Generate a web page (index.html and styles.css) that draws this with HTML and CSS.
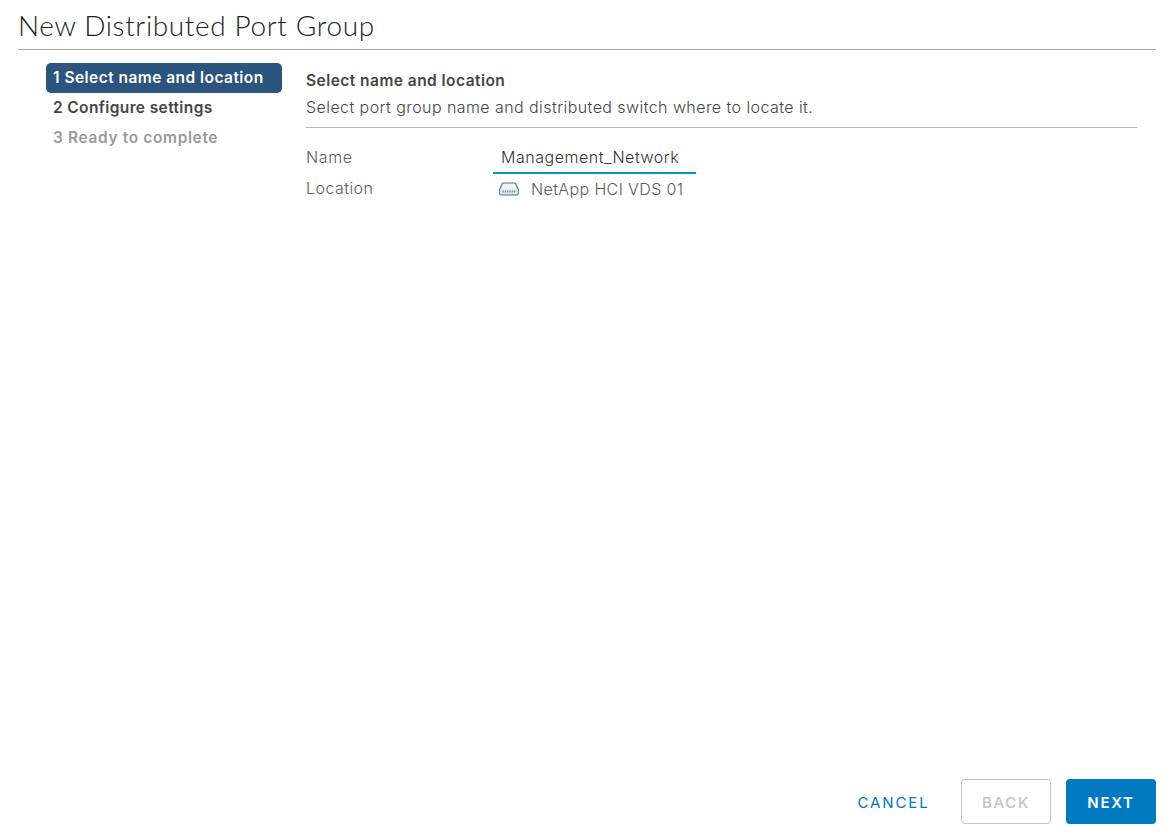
FILE: index.html
```html
<!DOCTYPE html>
<html lang="en">
<head>
<meta charset="utf-8">
<title>New Distributed Port Group</title>
<link rel="stylesheet" href="styles.css">
</head>
<body>
<main class="wizard">
  <header class="wizard-header"><h1 class="wizard-title">New Distributed Port Group</h1></header>
  <div class="wizard-body">
    <nav class="steps">
      <div class="step step-active">1 Select name and location</div>
      <div class="step step-ready">2 Configure settings</div>
      <div class="step step-disabled">3 Ready to complete</div>
    </nav>
    <section class="page">
      <div class="page-header">
        <h2 class="page-title">Select name and location</h2>
        <p class="page-description">Select port group name and distributed switch where to locate it.</p>
      </div>
      <div class="form">
        <div class="label">Name</div>
        <div class="name-field">Management_Network</div>
        <div class="label label-location">Location</div>
        <div class="location">
          <svg class="switch-icon" viewBox="0 0 20 14" width="20" height="14">
            <path d="M4.6 1h10.800c.7 0 1.200.3 1.500.9l2.300 5.400v4.100c0 .9-.5 1.500-1.400 1.500H2.200c-.9 0-1.400-.6-1.400-1.500V7.300l2.300-5.400c.3-.6.8-.9 1.500-.9z" fill="#f0f0f0" stroke="#4c7597" stroke-width="1.200"/>
            <path d="M1.500 7.500h17v3.700c0 .7-.3 1-1 1h-15c-.7 0-1-.3-1-1z" fill="#dcebf5"/>
            <path d="M3.500 9.500h13" stroke="#6688a5" stroke-width="2" stroke-dasharray="1.200 1.100"/>
          </svg>
          <span>NetApp HCI VDS 01</span>
        </div>
      </div>
    </section>
  </div>
  <footer class="wizard-footer">
    <button class="btn btn-link">CANCEL</button>
    <button class="btn btn-outline" disabled>BACK</button>
    <button class="btn btn-primary">NEXT</button>
  </footer>
</main>
</body>
</html>
```
FILE: styles.css
```css
* { box-sizing: border-box; }
body { margin: 0; background: #fff; color: #454545; font-family: Inter, "Open Sans", sans-serif; font-size: 16px; }
h1, h2, p { margin: 0; }
.wizard { display: flex; flex-direction: column; width: 1174px; height: 836px; padding: 0 18px 12px; overflow: hidden; }
.wizard-header { height: 50px; border-bottom: 1px solid #a8a8a8; }
.wizard-title { color: #222; font: 300 28px/51px Lato, sans-serif; letter-spacing: .63px; white-space: nowrap; }
.wizard-body { display: flex; flex: 1; gap: 24px; padding: 13px 19px 0 28px; }
.steps { width: 236px; flex: none; font-size: 15.5px; font-weight: 600; line-height: 30px; white-space: nowrap; }
.step { height: 30px; padding-left: 7px; border-radius: 5px; }
.step-active { background: #2b547e; color: #fff; line-height: 29px; letter-spacing: .46px; }
.step-ready { color: #454545; letter-spacing: .38px; }
.step-disabled { color: #9a9a9a; letter-spacing: .63px; }
.page { flex: 1; padding-top: 5px; }
.page-header { height: 60px; border-bottom: 1px solid #b5b5b5; white-space: nowrap; }
.page-title { font-size: 15.5px; line-height: 26px; font-weight: 600; letter-spacing: .46px; }
.page-description { font-weight: 350; line-height: 27px; letter-spacing: .43px; }
.form { display: grid; grid-template-columns: 187px 203px; grid-template-rows: 32px 29px; padding-top: 14px; font-weight: 350; }
.label { color: #5c5c5c; line-height: 31px; letter-spacing: .6px; }
.label-location { line-height: 29px; letter-spacing: .45px; }
.name-field { color: #333; height: 32px; line-height: 31px; padding-left: 8px; border-bottom: 2px solid #0095d9; letter-spacing: .54px; }
.location { display: flex; align-items: center; gap: 12px; padding-left: 6px; color: #5c5c5c; letter-spacing: .38px; white-space: nowrap; }
.switch-icon { flex: none; }
.wizard-footer { display: flex; justify-content: flex-end; height: 45px; gap: 15px; }
.btn { height: 45px; padding: 2px 0 0; border: 1px solid transparent; border-radius: 4px; background: none; font: 500 15px/40px Inter, sans-serif; letter-spacing: 1.7px; width: 90px; }
.btn-link { width: 106px; color: #0079b8; font-weight: 400; letter-spacing: 1.900px; padding-left: 1px; }
.btn-outline { border-color: #c4c4c4; color: #c4c4c4; }
.btn-primary { background: #0079c1; color: #fff; font-weight: 600; }
```
